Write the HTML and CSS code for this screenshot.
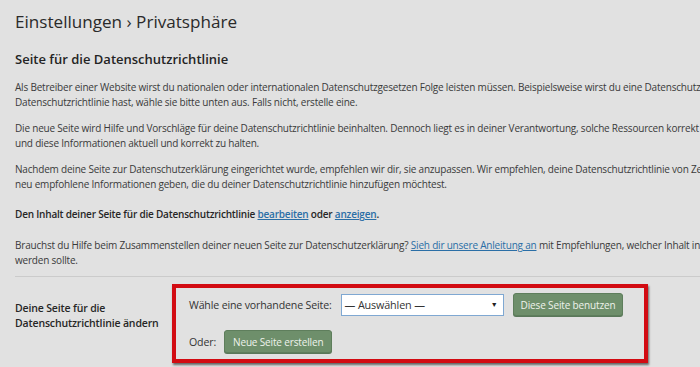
FILE: index.html
```html
<!DOCTYPE html>
<html lang="de">
<head>
<meta charset="utf-8">
<title>Einstellungen › Privatsphäre</title>
<link rel="stylesheet" href="styles.css">
</head>
<body>
<div class="wrap">
  <h1 class="title">Einstellungen › Privatsphäre</h1>
  <h2 class="section">Seite für die Datenschutzrichtlinie</h2>
  <p class="text">Als Betreiber einer Website wirst du nationalen oder internationalen Datenschutzgesetzen Folge leisten müssen. Beispielsweise wirst du eine Datenschutzerklärung erstellen und anzeigen müssen. Falls du bereits eine<br>Datenschutzrichtlinie hast, wähle sie bitte unten aus. Falls nicht, erstelle eine.</p>
  <p class="text">Die neue Seite wird Hilfe und Vorschläge für deine Datenschutzrichtlinie beinhalten. Dennoch liegt es in deiner Verantwortung, solche Ressourcen korrekt zu nutzen, die Informationen bereitzustellen,<br>und diese Informationen aktuell und korrekt zu halten.</p>
  <p class="text">Nachdem deine Seite zur Datenschutzerklärung eingerichtet wurde, empfehlen wir dir, sie anzupassen. Wir empfehlen, deine Datenschutzrichtlinie von Zeit zu Zeit zu überprüfen, da dir Plugins<br>neu empfohlene Informationen geben, die du deiner Datenschutzrichtlinie hinzufügen möchtest.</p>
  <p class="text strong">Den Inhalt deiner Seite für die Datenschutzrichtlinie <a href="#">bearbeiten</a> oder <a href="#">anzeigen</a>.</p>
  <p class="text help">Brauchst du Hilfe beim Zusammenstellen deiner neuen Seite zur Datenschutzerklärung? <a href="#">Sieh dir unsere Anleitung an</a> mit Empfehlungen, welcher Inhalt in der Datenschutzerklärung stehen und wie er formuliert<br>werden sollte.</p>
  <hr class="divider">
  <div class="row">
    <div class="row-label">Deine Seite für die<br>Datenschutzrichtlinie ändern</div>
    <div class="highlight">
      <div class="line">
        <span class="lbl">Wähle eine vorhandene Seite:</span>
        <div class="select"><span>— Auswählen —</span><span class="arrow">▼</span></div>
        <button class="btn use">Diese Seite benutzen</button>
      </div>
      <div class="line second">
        <span class="lbl">Oder:</span>
        <button class="btn">Neue Seite erstellen</button>
      </div>
    </div>
  </div>
</div>
</body>
</html>
```

FILE: styles.css
```css
html, body {
  margin: 0;
  padding: 0;
  background: #e1e1e1;
  overflow: hidden;
}
body {
  width: 700px;
  height: 367px;
  font-family: "Open Sans", "Noto Sans", sans-serif;
  color: #3a3a3a;
}
.wrap {
  padding: 10px 0 0 15px;
  width: 1200px;
}
.title {
  margin: 0;
  font-size: 17.1px;
  font-weight: 400;
  line-height: 24px;
  color: #2a2a2a;
}
.section {
  margin: 16px 0 0 0;
  font-size: 13px;
  font-weight: 600;
  line-height: 18px;
  color: #242424;
}
.text {
  margin: 12px 0 0 0;
  font-size: 10px;
  letter-spacing: -0.2px;
  line-height: 15px;
  white-space: nowrap;
}
.text a {
  color: #2a6ea6;
  text-decoration: underline;
}
.text + .text {
  margin-top: 11px;
}
.text + .strong {
  font-weight: 600;
  color: #262626;
  margin-top: 15px;
}
.text + .help {
  margin-top: 16px;
}
.divider {
  margin: 8px 0 0 0;
  border: 0;
  border-top: 1px solid #cbcbcb;
  width: 685px;
}
.row {
  display: flex;
  align-items: flex-start;
  margin-top: 7px;
}
.row-label {
  width: 157px;
  padding-top: 17px;
  font-size: 10.5px;
  letter-spacing: -0.15px;
  font-weight: 600;
  line-height: 15px;
  color: #262626;
}
.highlight {
  width: 455px;
  height: 66px;
  border: 4px solid #d20b12;
  box-shadow: 1px 2px 2px rgba(0, 0, 0, 0.55);
  padding: 5px 0 0 13px;
  display: flex;
  flex-direction: column;
  gap: 14px;
  font-size: 10.6px;
  letter-spacing: -0.15px;
}
.line {
  display: flex;
  align-items: center;
}
.lbl {
  color: #333;
  margin-right: 9px;
}
.second .lbl {
  margin-right: 8px;
}
.select {
  width: 163px;
  height: 22px;
  background: #fff;
  border: 1px solid #7fa8d2;
  display: flex;
  align-items: center;
  justify-content: space-between;
  padding: 0 5px 0 3px;
  font-size: 10.8px;
  color: #333;
  box-sizing: border-box;
}
.arrow {
  font-size: 7px;
  color: #222;
}
.btn {
  font-family: inherit;
  font-size: 10px;
  letter-spacing: -0.15px;
  color: #eef3ec;
  background: #6e8f6b;
  border: 1px solid #5e7e5c;
  border-radius: 3px;
  height: 23px;
  padding: 0 7px;
  box-shadow: 0 1px 0 #5a785a;
}
.second .btn {
  padding: 0 8px;
}
.use {
  margin-left: 9px;
}
```
